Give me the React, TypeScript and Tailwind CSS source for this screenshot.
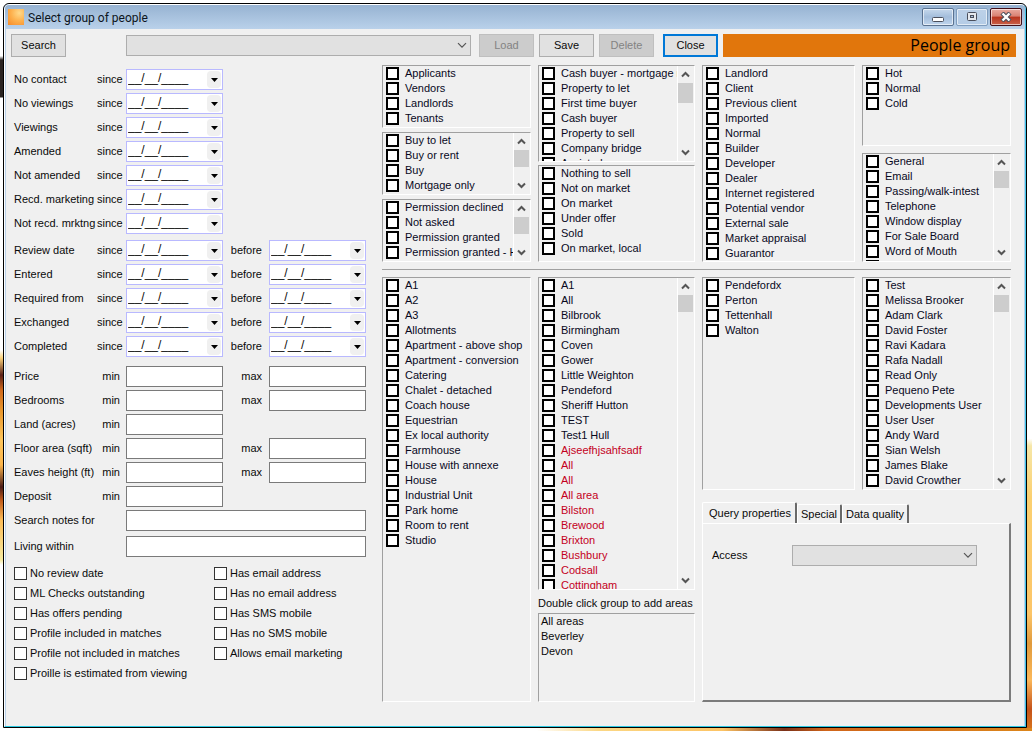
import React, { useId, useState } from 'react';
import clsx from 'clsx';

const PEOPLE_TYPES = ['Applicants', 'Vendors', 'Landlords', 'Tenants'];
const BUY_TYPES = ['Buy to let', 'Buy or rent', 'Buy', 'Mortgage only'];
const PERMISSIONS = ['Permission declined', 'Not asked', 'Permission granted', 'Permission granted - House'];
const BUYER_POSITIONS = [
  'Cash buyer - mortgage required', 'Property to let', 'First time buyer', 'Cash buyer',
  'Property to sell', 'Company bridge', 'Assisted',
];
const SELLING_POSITIONS = [
  'Nothing to sell', 'Not on market', 'On market', 'Under offer', 'Sold', 'On market, local',
];
const CONTACT_TYPES = [
  'Landlord', 'Client', 'Previous client', 'Imported', 'Normal', 'Builder', 'Developer', 'Dealer',
  'Internet registered', 'Potential vendor', 'External sale', 'Market appraisal', 'Guarantor',
];
const RATINGS = ['Hot', 'Normal', 'Cold'];
const SOURCES = [
  'General', 'Email', 'Passing/walk-intest', 'Telephone', 'Window display', 'For Sale Board',
  'Word of Mouth', 'Website',
];
const PROPERTY_TYPES = [
  'A1', 'A2', 'A3', 'Allotments', 'Apartment - above shop', 'Apartment - conversion', 'Catering',
  'Chalet - detached', 'Coach house', 'Equestrian', 'Ex local authority', 'Farmhouse',
  'House with annexe', 'House', 'Industrial Unit', 'Park home', 'Room to rent', 'Studio',
];
const AREAS = [
  'A1', 'All', 'Bilbrook', 'Birmingham', 'Coven', 'Gower', 'Little Weighton', 'Pendeford',
  'Sheriff Hutton', 'TEST', 'Test1 Hull', 'Ajseefhjsahfsadf', 'All', 'All', 'All area', 'Bilston',
  'Brewood', 'Brixton', 'Bushbury', 'Codsall', 'Cottingham',
];
const OFFICES = ['Pendefordx', 'Perton', 'Tettenhall', 'Walton'];
const USERS = [
  'Test', 'Melissa Brooker', 'Adam Clark', 'David Foster', 'Ravi Kadara', 'Rafa Nadall', 'Read Only',
  'Pequeno Pete', 'Developments User', 'User User', 'Andy Ward', 'Sian Welsh', 'James Blake',
  'David Crowther',
];
const AREA_GROUPS = ['All areas', 'Beverley', 'Devon'];
const FLAGS_LEFT = [
  'No review date', 'ML Checks outstanding', 'Has offers pending', 'Profile included in matches',
  'Profile not included in matches', 'Proille is estimated from viewing',
];
const FLAGS_RIGHT = [
  'Has email address', 'Has no email address', 'Has SMS mobile', 'Has no SMS mobile',
  'Allows email marketing',
];
const TABS = ['Query properties', 'Special', 'Data quality'];

// ── Checked list ─────────────────────────────────────────────────────────────
const ScrollBar: React.FC<{ tall?: boolean }> = ({ tall }) => (
  <div className="flex w-[17px] shrink-0 flex-col border-l border-white pr-px">
    <button type="button" aria-label="Scroll up" className="flex h-[17px] shrink-0 items-center justify-center">
      <svg width="9" height="7" viewBox="0 0 9 7" fill="none" stroke="#555" strokeWidth="2">
        <path d="M1 5.5 4.5 2 8 5.5" />
      </svg>
    </button>
    <div className={clsx('bg-[#cdcdcd]', tall ? 'h-5' : 'h-[17px]')} />
    <div className="flex-1" />
    <button type="button" aria-label="Scroll down" className="flex h-[17px] shrink-0 items-center justify-center">
      <svg width="9" height="7" viewBox="0 0 9 7" fill="none" stroke="#555" strokeWidth="2">
        <path d="M1 1.5 4.5 5 8 1.5" />
      </svg>
    </button>
  </div>
);

const CheckList: React.FC<{
  items: string[];
  className?: string;
  scroll?: boolean;
  tallThumb?: boolean;
  redFrom?: number;
}> = ({ items, className, scroll, tallThumb, redFrom = Infinity }) => (
  <div
    className={clsx(
      'flex min-w-0 overflow-hidden border border-t-[#a0a0a0] border-r-white border-b-white border-l-[#a0a0a0]',
      className
    )}
  >
    <div className="min-w-0 flex-1 overflow-hidden pl-[3px]">
      {items.map((item, i) => (
        <label
          key={i}
          className={clsx(
            'flex h-[15px] items-center gap-1.5 whitespace-nowrap',
            i >= redFrom ? 'text-[#c4001c]' : 'text-[#08081c]'
          )}
        >
          <input
            type="checkbox"
            className="size-[13px] shrink-0 appearance-none border-2 border-black bg-white checked:bg-black"
          />
          {item}
        </label>
      ))}
    </div>
    {scroll && <ScrollBar tall={tallThumb} />}
  </div>
);

// ── Form fields ──────────────────────────────────────────────────────────────
const DateField: React.FC<{ id: string; label: string }> = ({ id, label }) => (
  <div className="flex h-[21px] border border-[#b9b9ff] bg-white">
    <input
      id={id}
      type="text"
      defaultValue="__/__/____"
      aria-label={label}
      className="min-w-0 flex-1 pb-0.5 pl-px text-xs leading-[15px] focus:outline-none"
    />
    <button
      type="button"
      aria-label={`Pick ${label}`}
      className="my-px mr-px flex w-3.5 items-center justify-center rounded-sm bg-[#f0f0f0]"
    >
      <svg width="7" height="4" viewBox="0 0 7 4">
        <path d="M0 0h7L3.5 4z" />
      </svg>
    </button>
  </div>
);

const rowCls = 'grid grid-cols-[83px_29px_97px_46px_97px] items-center';
const textCls = 'h-[21px] w-full border border-[#7a7a7a] bg-white px-1 focus:outline-none';

const DateRow: React.FC<{ label: string; before?: boolean }> = ({ label, before }) => {
  const id = useId();
  return (
    <div className={rowCls}>
      <span className="whitespace-nowrap">{label}</span>
      <label htmlFor={`${id}-since`} className="pr-1 text-right">since</label>
      <DateField id={`${id}-since`} label={`${label} since`} />
      {before && (
        <>
          <label htmlFor={`${id}-before`} className="pr-[7px] text-right">before</label>
          <DateField id={`${id}-before`} label={`${label} before`} />
        </>
      )}
    </div>
  );
};

const RangeRow: React.FC<{ label: string; max?: boolean }> = ({ label, max }) => {
  const id = useId();
  return (
    <div className={rowCls}>
      <span className="whitespace-nowrap">{label}</span>
      <label htmlFor={`${id}-min`} className="pr-1.5 text-right">min</label>
      <input id={`${id}-min`} type="text" aria-label={`${label} min`} className={textCls} />
      {max && (
        <>
          <label htmlFor={`${id}-max`} className="pr-[7px] text-right">max</label>
          <input id={`${id}-max`} type="text" aria-label={`${label} max`} className={textCls} />
        </>
      )}
    </div>
  );
};

const TextRow: React.FC<{ label: string }> = ({ label }) => (
  <label className="grid grid-cols-[112px_1fr] items-center">
    {label}
    <input type="text" className={textCls} />
  </label>
);

const Flag: React.FC<{ label: string }> = ({ label }) => (
  <label className="flex h-5 items-center gap-[3px] whitespace-nowrap">
    <input
      type="checkbox"
      className="size-[13px] shrink-0 appearance-none border border-[#333] bg-white checked:bg-[#333]"
    />
    {label}
  </label>
);

const Combo: React.FC<{ id?: string; label?: string; className?: string }> = ({ id, label, className }) => (
  <div className={clsx('relative h-[21px]', className)}>
    <select
      id={id}
      aria-label={label}
      disabled
      className="block h-full w-full appearance-none border border-[#adadad] bg-[#e1e1e1]"
    />
    <svg
      className="pointer-events-none absolute top-[7px] right-1"
      width="10" height="7" viewBox="0 0 10 7" fill="none" stroke="#555" strokeWidth="1.2"
    >
      <path d="M1 1.2 5 5.2 9 1.2" />
    </svg>
  </div>
);

const btnCls = 'h-[23px] w-[55px] shrink-0 border border-[#adadad] bg-[#e1e1e1]';
const btnOffCls = 'h-[23px] w-[55px] shrink-0 border border-[#bfbfbf] bg-[#ccc] text-[#838383]';

// ── Title bar ────────────────────────────────────────────────────────────────
const captionCls =
  'flex h-[18px] w-8 items-center justify-center rounded-xs border border-[#5a7290] shadow-[inset_0_0_0_1px_rgba(255,255,255,0.6)]';

const TitleBar = () => (
  <header className="flex h-6 shrink-0 items-center rounded-t-sm bg-linear-to-b from-[#97b3d2] to-[#b9d1ea] pr-[3px] pl-[3px]">
    <span className="size-4 bg-[radial-gradient(circle_at_70%_25%,#ffd98a,#fdb04c_50%,#f58a2c)]" />
    <h1 className="ml-1 flex-1 pt-0.5 font-[Roboto,sans-serif] text-xs leading-4 text-[#0c1420]">
      Select group of people
    </h1>
    <div className="flex gap-0.5">
      <button
        type="button"
        aria-label="Minimize"
        className={clsx(captionCls, 'bg-linear-to-b from-[#c6d8ec] via-[#a3bddb] to-[#bfd5ed]')}
      >
        <svg width="12" height="12" viewBox="0 0 12 12">
          <rect x="0.5" y="6.5" width="11" height="4" rx="1" fill="#fff" stroke="#4a4f5c" />
        </svg>
      </button>
      <button
        type="button"
        aria-label="Maximize"
        className={clsx(captionCls, 'border-[#7f9cbd] bg-linear-to-b from-[#bdd1e8] to-[#b4cce6]')}
      >
        <svg width="12" height="10" viewBox="0 0 12 10">
          <rect x="1.5" y="0.5" width="9" height="8" rx="1" fill="#e4e8ee" stroke="#4a4f5c" />
          <rect x="4.5" y="3.5" width="3" height="2" fill="#a9c1dd" stroke="#4a4f5c" />
        </svg>
      </button>
      <button
        type="button"
        aria-label="Close window"
        className={clsx(
          captionCls,
          'border-[#43101a] bg-[linear-gradient(#e9aba0,#d98172_45%,#b8341d_50%,#c9614a)]'
        )}
      >
        <svg width="12" height="10" viewBox="0 0 12 10">
          <path d="M2 1l8 8M10 1L2 9" stroke="#4a4f5c" strokeWidth="4.4" />
          <path d="M2.5 1.5l7 7M9.5 1.5l-7 7" stroke="#fff" strokeWidth="2.4" />
        </svg>
      </button>
    </div>
  </header>
);

// ── Tabs ─────────────────────────────────────────────────────────────────────
const PropertyTabs = () => {
  const [active, setActive] = useState(TABS[0]);
  return (
    <div className="flex flex-1 flex-col">
      <div role="tablist" className="flex h-[21px] items-end">
        {TABS.map((tab) => (
          <button
            key={tab}
            type="button"
            role="tab"
            aria-selected={tab === active}
            onClick={() => setActive(tab)}
            className={clsx(
              'rounded-t-xs border-t border-r-2 border-l border-t-white border-r-[#696969] border-l-white bg-[#f0f0f0] whitespace-nowrap',
              tab === active ? 'h-[21px] pr-1 pl-1.5' : 'h-[19px] px-[3px]'
            )}
          >
            {tab}
          </button>
        ))}
      </div>
      <div
        role="tabpanel"
        className="flex-1 border-t border-r-2 border-b-2 border-l border-t-white border-r-[#7b7b7b] border-b-[#7b7b7b] border-l-white pt-[21px] pr-8 pl-[9px]"
      >
        {active === TABS[0] && (
          <div className="flex items-center">
            <label htmlFor="access" className="w-20">Access</label>
            <Combo id="access" className="flex-1" />
          </div>
        )}
      </div>
    </div>
  );
};

export default function App() {
  return (
    <div className="flex min-h-screen flex-col bg-white bg-[linear-gradient(90deg,transparent_52%,#fbd784_58%,#fdc465_70%,#7a3018_76%,#d0651a_80%,#dc861c),linear-gradient(transparent_60%,#f6e7a8_61%,#fbd070_68%,#fcc568_84%,#e09a3c_88%,#fbb85a_93%,#c4521a_97%,#d8761c),linear-gradient(transparent_56px,#2a2422_60px,#2a2422_97px,transparent_98px,transparent_350px,#fbd27a_358px,#5a2018_375px,#d0691c_390px,#e8962c_410px,#fdc55c_440px,#fbb54c_465px,#4a1c18_487px,#c05a1a_500px,#fdbd58_520px,#f6eaa0_560px,#fff_565px)] [background-position:0_100%,100%_0,0_0] [background-size:100%_3px,6px_100%,3px_100%] bg-no-repeat pt-[3px] pr-[5px] pb-[3px] pl-[3px] font-['Liberation_Sans',sans-serif] text-[11px] leading-[15px] text-[#0a0a0a]">
      <div className="flex flex-1 flex-col rounded-t-md border border-black bg-[#b9d1ea]">
        <div className="flex flex-1 flex-col rounded-t-md border border-t-white border-r-[#3fc4e8] border-b-[#2bc8e0] border-l-white">
          <TitleBar />
          <main className="mx-px flex flex-1 flex-col bg-[#f0f0f0] pt-[5px] pb-6">
            {/* Toolbar */}
            <div className="flex items-center pr-2 pl-[5px]">
              <button type="button" className={btnCls}>Search</button>
              <Combo label="Saved group" className="ml-[60px] flex-1" />
              <button type="button" disabled className={clsx(btnOffCls, 'ml-2')}>Load</button>
              <button type="button" className={clsx(btnCls, 'ml-[5px]')}>Save</button>
              <button type="button" disabled className={clsx(btnOffCls, 'ml-[5px]')}>Delete</button>
              <button
                type="button"
                className="ml-[9px] h-[23px] w-[55px] shrink-0 border-2 border-[#0078d7] bg-[#e1e1e1]"
              >
                Close
              </button>
              <h2 className="ml-[5px] h-[23px] w-[293px] bg-[#e1760c] pr-1.5 text-right font-['Open_Sans',sans-serif] text-base leading-[22px] text-black">
                People group
              </h2>
            </div>

            <div className="flex flex-1 gap-4 pt-2 pr-[13px] pl-2">
              {/* Search criteria */}
              <form className="w-[352px] shrink-0 pt-1">
                <div className="grid gap-[3px]">
                  <DateRow label="No contact" />
                  <DateRow label="No viewings" />
                  <DateRow label="Viewings" />
                  <DateRow label="Amended" />
                  <DateRow label="Not amended" />
                  <DateRow label="Recd. marketing" />
                  <DateRow label="Not recd. mrktng" />
                </div>
                <div className="mt-1.5 grid gap-[3px]">
                  <DateRow label="Review date" before />
                  <DateRow label="Entered" before />
                  <DateRow label="Required from" before />
                  <DateRow label="Exchanged" before />
                  <DateRow label="Completed" before />
                </div>
                <div className="mt-[9px] grid gap-[3px]">
                  <RangeRow label="Price" max />
                  <RangeRow label="Bedrooms" max />
                  <RangeRow label="Land (acres)" />
                  <RangeRow label="Floor area (sqft)" max />
                  <RangeRow label="Eaves height (ft)" max />
                  <RangeRow label="Deposit" />
                  <TextRow label="Search notes for" />
                </div>
                <div className="mt-[5px]">
                  <TextRow label="Living within" />
                </div>
                <div className="mt-1.5 grid grid-cols-[200px_1fr]">
                  <div>{FLAGS_LEFT.map((f) => <Flag key={f} label={f} />)}</div>
                  <div>{FLAGS_RIGHT.map((f) => <Flag key={f} label={f} />)}</div>
                </div>
              </form>

              {/* Pick lists */}
              <div className="flex min-w-0 flex-1 flex-col">
                <div className="grid grid-cols-[149fr_157fr_153fr_149fr] gap-[7px]">
                  <div className="flex min-w-0 flex-col gap-1">
                    <CheckList items={PEOPLE_TYPES} className="h-[63px]" />
                    <CheckList items={BUY_TYPES} className="h-[63px]" scroll />
                    <CheckList items={PERMISSIONS} className="h-[63px]" scroll />
                  </div>
                  <div className="flex min-w-0 flex-col gap-[3px]">
                    <CheckList items={BUYER_POSITIONS} className="h-[97px]" scroll tallThumb />
                    <CheckList items={SELLING_POSITIONS} className="h-[97px]" />
                  </div>
                  <CheckList items={CONTACT_TYPES} />
                  <div className="flex min-w-0 flex-col gap-[7px]">
                    <CheckList items={RATINGS} className="h-[81px]" />
                    <CheckList items={SOURCES} className="h-[109px]" scroll />
                  </div>
                </div>

                <hr className="my-[7px] border-[#a0a0a0]" />

                <div className="grid flex-1 grid-cols-[149fr_157fr_153fr_149fr] gap-[7px]">
                  <CheckList items={PROPERTY_TYPES} />
                  <div className="flex min-w-0 flex-col">
                    <CheckList items={AREAS} className="h-[313px]" scroll redFrom={11} />
                    <label htmlFor="area-groups" className="pt-1.5 pb-0.5 leading-[15px] whitespace-nowrap">
                      Double click group to add areas
                    </label>
                    <select
                      id="area-groups"
                      size={5}
                      className="flex-1 appearance-none overflow-hidden border border-t-[#a0a0a0] border-r-white border-b-white border-l-[#a0a0a0] bg-transparent pt-px focus:outline-none"
                    >
                      {AREA_GROUPS.map((g) => (
                        <option key={g} className="h-[15px] min-h-0 px-0.5 py-0 leading-[15px]">{g}</option>
                      ))}
                    </select>
                  </div>
                  <div className="col-span-2 flex min-w-0 flex-col gap-3">
                    <div className="grid h-[213px] grid-cols-[153fr_149fr] gap-[7px]">
                      <CheckList items={OFFICES} />
                      <CheckList items={USERS} scroll />
                    </div>
                    <PropertyTabs />
                  </div>
                </div>
              </div>
            </div>
          </main>
        </div>
      </div>
    </div>
  );
}
